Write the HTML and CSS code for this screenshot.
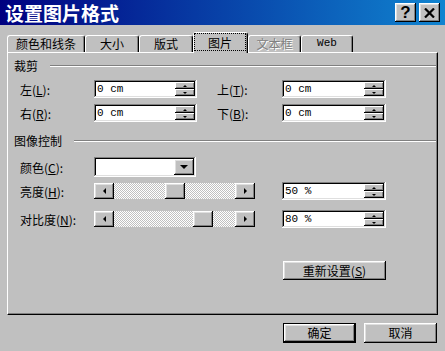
FILE: index.html
```html
<!DOCTYPE html>
<html lang="zh-CN">
<head>
    <meta charset="UTF-8">
    <title>设置图片格式</title>
    <link rel="stylesheet" href="styles.css">
</head>
<body>
    <div class="titlebar">
        <span class="title">设置图片格式</span>
        <div class="title-btns">
            <div class="tbtn raised help">?</div>
            <div class="tbtn raised close">
                <svg width="11" height="10" viewBox="0 0 11 10"><path d="M1 0.5 L10 9.5 M10 0.5 L1 9.5" stroke="#000" stroke-width="2.2"/></svg>
            </div>
        </div>
    </div>

    <div class="tabs">
        <div class="tab" style="width:78px">颜色和线条</div>
        <div class="tab" style="width:54px">大小</div>
        <div class="tab" style="width:54px">版式</div>
        <div class="tab active" style="width:55px"><span class="focus">图片</span></div>
        <div class="tab disabled" style="width:53px">文本框</div>
        <div class="tab web" style="width:52px">Web</div>
    </div>

    <div class="panel">
        <!-- 裁剪 -->
        <div class="group-head"><span>裁剪</span><i class="etch"></i></div>
        <div class="row r1">
            <span class="lbl">左(<u>L</u>):</span>
            <div class="spin sunken"><span class="val">0 cm</span><div class="spin-btns"><b class="raised up"></b><b class="raised down"></b></div></div>
            <span class="lbl2">上(<u>T</u>):</span>
            <div class="spin sunken wide"><span class="val">0 cm</span><div class="spin-btns"><b class="raised up"></b><b class="raised down"></b></div></div>
        </div>
        <div class="row r2">
            <span class="lbl">右(<u>R</u>):</span>
            <div class="spin sunken"><span class="val">0 cm</span><div class="spin-btns"><b class="raised up"></b><b class="raised down"></b></div></div>
            <span class="lbl2">下(<u>B</u>):</span>
            <div class="spin sunken wide"><span class="val">0 cm</span><div class="spin-btns"><b class="raised up"></b><b class="raised down"></b></div></div>
        </div>

        <!-- 图像控制 -->
        <div class="group-head g2"><span>图像控制</span><i class="etch"></i></div>
        <div class="row r3">
            <span class="lbl">颜色(<u>C</u>):</span>
            <div class="combo sunken"><div class="combo-btn raised"></div></div>
        </div>
        <div class="row r4">
            <span class="lbl">亮度(<u>H</u>):</span>
            <div class="scroll">
                <div class="sb-btn raised left"></div>
                <div class="thumb raised" style="--v:50"></div>
                <div class="sb-btn raised right"></div>
            </div>
            <div class="spin sunken wide gap"><span class="val">50 %</span><div class="spin-btns"><b class="raised up"></b><b class="raised down"></b></div></div>
        </div>
        <div class="row r5">
            <span class="lbl">对比度(<u>N</u>):</span>
            <div class="scroll">
                <div class="sb-btn raised left"></div>
                <div class="thumb raised" style="--v:78"></div>
                <div class="sb-btn raised right"></div>
            </div>
            <div class="spin sunken wide gap"><span class="val">80 %</span><div class="spin-btns"><b class="raised up"></b><b class="raised down"></b></div></div>
        </div>

        <div class="reset-row">
            <button class="btn raised reset">重新设置(<u>S</u>)</button>
        </div>
    </div>

    <div class="footer">
        <button class="btn default">确定</button>
        <button class="btn raised">取消</button>
    </div>
</body>
</html>
```

FILE: styles.css
```css
* {
    box-sizing: border-box;
    margin: 0;
    padding: 0;
}

body {
    width: 445px;
    height: 351px;
    overflow: hidden;
    background: #c0c0c0;
    color: #000;
    font-family: "Noto Sans CJK SC", sans-serif;
    font-size: 12px;
}

/* 3d borders */
.raised {
    background: #c0c0c0;
    box-shadow: inset -1px -1px #000, inset 1px 1px #fff, inset -2px -2px #808080, inset 2px 2px #dfdfdf;
}
.sunken {
    background: #fff;
    box-shadow: inset -1px -1px #fff, inset 1px 1px #808080, inset -2px -2px #dfdfdf, inset 2px 2px #000;
}

/* title bar */
.titlebar {
    height: 25px;
    display: flex;
    align-items: center;
    justify-content: space-between;
    padding: 0 5px;
    background: linear-gradient(90deg, #000080, #1084d0);
}
.title {
    color: #fff;
    font-weight: bold;
    font-size: 19px;
    line-height: 25px;
}
.title-btns {
    display: flex;
    gap: 3px;
}
.tbtn {
    width: 21px;
    height: 19px;
    display: flex;
    align-items: center;
    justify-content: center;
}
.help {
    font-family: "Liberation Sans", sans-serif;
    font-weight: bold;
    font-size: 17px;
    line-height: 19px;
}

/* tabs */
.tabs {
    display: flex;
    align-items: flex-end;
    height: 20px;
    margin-top: 7px;
    padding-left: 7px;
}
.tab {
    height: 17px;
    border: 1px solid #fff;
    border-bottom: none;
    border-right-color: #000;
    border-radius: 3px 3px 0 0;
    box-shadow: inset -1px 0 #808080;
    text-align: center;
    line-height: 15px;
}
.tab.active {
    position: relative;
    height: 21px;
    margin-bottom: -1px;
    background: #c0c0c0;
}
.tab .focus {
    display: block;
    height: 18px;
    margin: 0 1px 0 0;
    border: 1px dotted #000;
    line-height: 17px;
}
.tab.disabled {
    color: #808080;
    text-shadow: 1px 1px #fff;
}
.tab.web {
    font-family: "Liberation Mono", monospace;
    font-size: 11px;
}

/* panel */
.panel {
    width: 431px;
    height: 263px;
    margin-left: 7px;
    padding-top: 6px;
    border: 1px solid;
    border-color: #fff #000 #000 #fff;
    box-shadow: inset -1px -1px #808080;
}
.group-head {
    display: flex;
    align-items: center;
    height: 14px;
    padding: 0 1px 0 6px;
    line-height: 14px;
}
.group-head.g2 {
    margin-top: 12px;
}
.etch {
    flex: 1;
    height: 2px;
    margin-left: 12px;
    border-top: 1px solid #808080;
    border-bottom: 1px solid #fff;
}
.row {
    display: flex;
    align-items: center;
    height: 18px;
    padding-left: 12px;
}
.r1 { margin-top: 7px; }
.r2 { margin-top: 6px; }
.r3 { margin-top: 9px; height: 20px; }
.r4 { margin-top: 5px; }
.r5 { margin-top: 10px; }
.lbl {
    width: 74px;
    white-space: nowrap;
}
.lbl2 {
    width: 65px;
    margin-left: 20px;
}

/* spin box */
.spin {
    width: 103px;
    height: 18px;
    display: flex;
    padding: 2px;
}
.spin.wide {
    width: 104px;
}
.spin.gap {
    margin-left: 27px;
}
.val {
    flex: 1;
    padding-left: 1px;
    font-family: "Liberation Mono", monospace;
    font-size: 11px;
    line-height: 14px;
}
.spin-btns {
    width: 20px;
    display: flex;
    flex-direction: column;
}
.spin-btns b {
    flex: 1;
    display: flex;
    align-items: center;
    justify-content: center;
    box-shadow: inset -1px -1px #000, inset 1px 1px #fff, inset -2px -2px #808080;
}
.spin-btns b::before {
    content: "";
    border-left: 2px solid transparent;
    border-right: 2px solid transparent;
}
.spin-btns .up::before { border-bottom: 2px solid #000; }
.spin-btns .down::before { border-top: 2px solid #000; }

/* combo */
.combo {
    width: 102px;
    height: 20px;
    padding: 2px;
    display: flex;
    justify-content: flex-end;
}
.combo-btn {
    width: 20px;
    display: flex;
    align-items: center;
    justify-content: center;
}
.combo-btn::before {
    content: "";
    border-left: 4px solid transparent;
    border-right: 4px solid transparent;
    border-top: 4px solid #000;
}

/* scrollbar */
.scroll {
    width: 161px;
    height: 16px;
    display: flex;
    background: repeating-conic-gradient(#c0c0c0 0 25%, #fff 0 50%) 0 0 / 2px 2px;
}
.sb-btn,
.thumb {
    width: 20px;
    height: 16px;
}
.thumb {
    margin-left: calc(var(--v) * 1.01px);
}
.sb-btn {
    display: flex;
    align-items: center;
    justify-content: center;
}
.sb-btn.right {
    margin-left: auto;
}
.sb-btn::before {
    content: "";
    border-top: 3px solid transparent;
    border-bottom: 3px solid transparent;
}
.sb-btn.left::before { border-right: 3px solid #000; }
.sb-btn.right::before { border-left: 3px solid #000; }

/* buttons */
.btn {
    width: 73px;
    height: 20px;
    border: none;
    font: inherit;
    color: #000;
    line-height: 18px;
}
.reset-row {
    margin-top: 33px;
    padding-left: 275px;
}
.reset {
    width: 103px;
    height: 19px;
}
.btn.default {
    background: #c0c0c0;
    box-shadow: inset 0 0 0 1px #000, inset -2px -2px #000, inset 2px 2px #fff, inset -3px -3px #808080, inset 3px 3px #dfdfdf;
}
.footer {
    display: flex;
    justify-content: flex-end;
    gap: 8px;
    margin-top: 8px;
    padding-right: 8px;
}
```
